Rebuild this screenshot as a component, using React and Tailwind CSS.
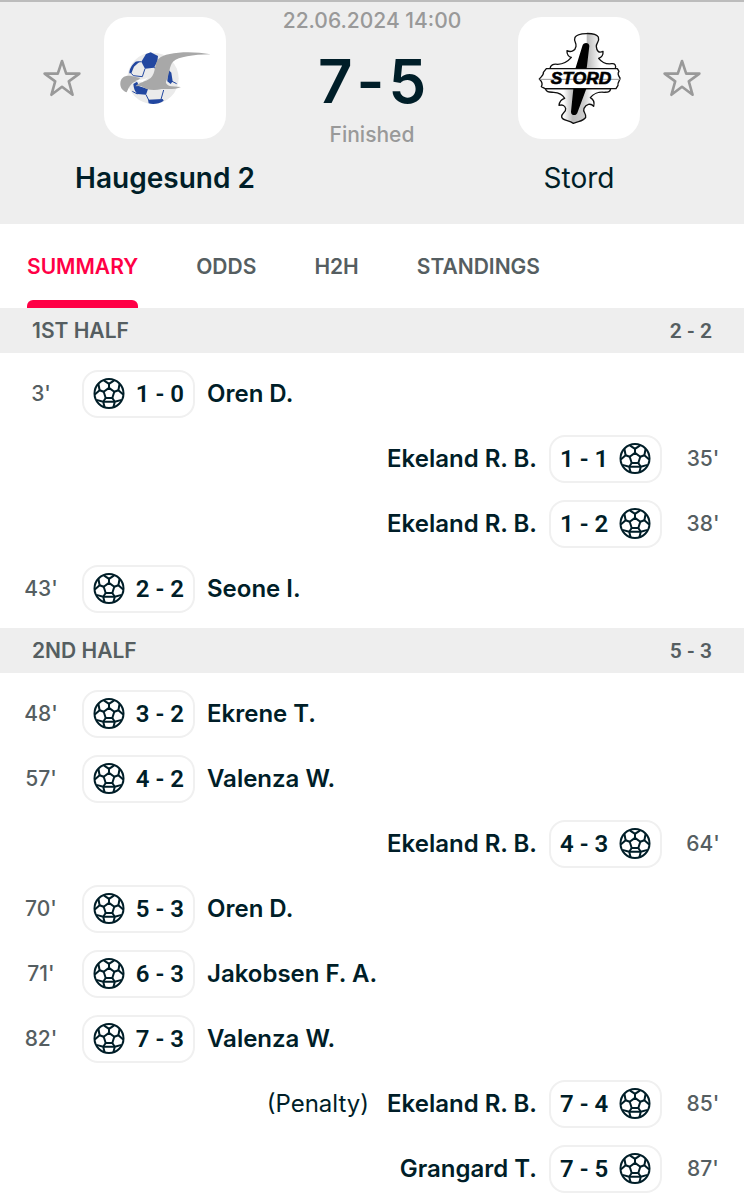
const halves = [
    {
        title: "1st half",
        score: "2 - 2",
        events: [
            { side: "home", time: "3'", score: "1 - 0", player: "Oren D." },
            { side: "away", time: "35'", score: "1 - 1", player: "Ekeland R. B." },
            { side: "away", time: "38'", score: "1 - 2", player: "Ekeland R. B." },
            { side: "home", time: "43'", score: "2 - 2", player: "Seone I." },
        ],
    },
    {
        title: "2nd half",
        score: "5 - 3",
        events: [
            { side: "home", time: "48'", score: "3 - 2", player: "Ekrene T." },
            { side: "home", time: "57'", score: "4 - 2", player: "Valenza W." },
            { side: "away", time: "64'", score: "4 - 3", player: "Ekeland R. B." },
            { side: "home", time: "70'", score: "5 - 3", player: "Oren D." },
            { side: "home", time: "71'", score: "6 - 3", player: "Jakobsen F. A." },
            { side: "home", time: "82'", score: "7 - 3", player: "Valenza W." },
            { side: "away", time: "85'", score: "7 - 4", player: "Ekeland R. B.", note: "(Penalty)" },
            { side: "away", time: "87'", score: "7 - 5", player: "Grangard T." },
        ],
    },
];

const tabs = ["Summary", "Odds", "H2H", "Standings"];

const BallIcon = () => (
    <svg viewBox="0 0 32 32" className="h-8 w-8 shrink-0" fill="none" stroke="#001e28" strokeWidth="2" strokeLinejoin="round" aria-hidden="true">
        <circle cx="16" cy="15.5" r="14.5" />
        <path d="M16 9.9 21.3 13.8 19.3 20H12.7L10.7 13.8Z" />
        <path d="M16 9.9V5.8M21.3 13.8 25.4 12.2M19.3 20 21.8 23.7M12.7 20 10.2 23.7M10.7 13.8 6.6 12.2" />
        <path d="M10.8 2.3 16 5.8 21.2 2.3M26.6 5.7 25.4 12.2 30.2 16.5M28.6 21.9 21.8 23.7 20.4 29.3M11.6 29.3 10.2 23.7 3.4 21.9M1.8 16.5 6.6 12.2 5.4 5.7M10.2 23.7H21.8" />
    </svg>
);

const StarButton = ({ team }) => (
    <button type="button" aria-label={`Add ${team} to favourites`} className="w-9 shrink-0">
        <svg viewBox="0 0 36 38" className="w-full overflow-visible" fill="none" stroke="#999" strokeWidth="2.6" strokeLinejoin="round">
            <path d="M18 2 22.2 14.6H35.4L24.8 22.4 28.6 35.8 18 27.8 7.4 35.8 11.2 22.4 0.6 14.6H13.8Z" />
        </svg>
    </button>
);

const HaugesundLogo = () => (
    <svg viewBox="12 21 366 366" className="w-full" role="img" aria-label="Haugesund">
        <circle cx="159" cy="205" r="77" fill="#ebebeb" />
        <g fill="#2247a0">
            <path d="M138 132 152 127 174 138 172 155 162 173 135 176 124 155Z" />
            <path d="M88 190C88 175 97 163 107 155L120 154 102 170 94 190Z" />
            <path d="M100 222 111 215 118 229 144 237 138 254 112 252C104 244 101 234 100 222Z" />
            <path d="M204 178 214 188 218 214 212 222 202 214Z" />
            <path d="M144 269 188 267 191 272C178 282 158 284 146 280Z" />
        </g>
        <g fill="none" stroke="#2247a0" strokeWidth="3">
            <path d="M107 157 124 155M135 176 127 200M94 190 100 197 127 200M162 173 176 176M138 254 146 270M183 268 191 240M216 214 230 221M97 244 112 252" />
        </g>
        <path
            d="M61 219C62 204 72 196 90 197L121 204 112 212C96 216 88 228 80 247 67 242 60 232 61 219Z"
            fill="#a8a8a8"
        />
        <path d="M106 212 134 207 146 202 128 216Z" fill="#fff" />
        <path
            d="M106 229C116 217 137 216 152 204 168 190 162 160 176 146 194 127 270 121 332 133 276 134 238 140 219 155 207 168 209 194 199 212 195 219 201 226 214 229L243 231C229 239 202 237 185 237 157 244 137 238 123 228Z"
            fill="#a8a8a8"
        />
    </svg>
);

const StordLogo = () => (
    <svg viewBox="22 21 366 366" className="w-full" role="img" aria-label="Stord">
        <defs>
            <linearGradient id="shade-top" x1="0" x2="1" y1="0" y2="0">
                <stop offset="0.55" stopColor="#fff" />
                <stop offset="0.57" stopColor="#bbb" />
                <stop offset="0.78" stopColor="#fff" />
            </linearGradient>
            <linearGradient id="shade-bottom" x1="0" x2="1" y1="0" y2="0">
                <stop offset="0.28" stopColor="#fff" />
                <stop offset="0.42" stopColor="#bbb" />
                <stop offset="0.58" stopColor="#ccc" />
                <stop offset="0.72" stopColor="#fff" />
            </linearGradient>
        </defs>
        <g stroke="#111" strokeWidth="4" strokeLinejoin="round">
            <path
                d="M118 176C119 166 128 160 141 163 158 162 172 154 182 142 174 142 168 132 169 122 181 128 194 122 196 109 198 98 188 94 193 82 200 68 254 66 263 81 268 96 256 98 257 110 258 123 264 130 277 124 278 134 272 142 264 145 274 158 287 163 303 161 313 160 317 166 314 176Z"
                fill="url(#shade-top)"
            />
            <path
                d="M104 236C107 247 116 246 129 247 146 248 157 256 162 265 152 268 146 276 145 286 156 283 163 287 165 296 167 307 151 310 153 321 156 333 174 330 188 340 202 333 219 334 225 322 228 310 215 307 220 295 226 283 240 278 249 289 252 278 248 268 239 263 247 252 264 245 281 247 292 246 299 246 300 236Z"
                fill="url(#shade-bottom)"
            />
            <path
                d="M107 176H320L325 184C320 190 322 196 328 204 329 212 320 216 322 226L316 236H103L92 230C97 222 94 215 86 207 92 199 101 194 98 187Z"
                fill="#fff"
            />
        </g>
        <path d="M87 208H328" stroke="#999" strokeWidth="3" />
        <path d="M215 108C217 96 236 96 236 108L228 176H194Z" />
        <path d="M188 236H227L201 306C199 319 180 318 181 305Z" />
        <text
            x="211"
            y="222"
            textAnchor="middle"
            stroke="#000"
            strokeWidth="2"
            className="font-['Liberation_Sans',sans-serif] text-[52px] font-bold italic"
        >
            STORD
        </text>
    </svg>
);

const TeamLogo = ({ children }) => (
    <div className="w-[122px] shrink-0 overflow-hidden rounded-3xl bg-white">{children}</div>
);

const MatchHeader = () => (
    <header className="border-t-2 border-[#bcbcbc] bg-[#eee] pb-7">
        <div className="flex items-start justify-between px-11 pt-[5px]">
            <div className="flex items-center gap-6 pt-[10px]">
                <StarButton team="Haugesund 2" />
                <TeamLogo>
                    <HaugesundLogo />
                </TeamLogo>
            </div>
            <div className="text-center text-[21px] leading-7 font-medium whitespace-nowrap text-[#999]">
                <p>22.06.2024 14:00</p>
                <p className="mt-4 flex justify-center gap-1 text-[60px] leading-[60px] font-semibold text-[#001e28]">
                    <span>7</span>
                    <span>-</span>
                    <span>5</span>
                </p>
                <p className="mt-[10px]">Finished</p>
            </div>
            <div className="flex items-center gap-6 pt-[10px]">
                <TeamLogo>
                    <StordLogo />
                </TeamLogo>
                <StarButton team="Stord" />
            </div>
        </div>
        <div className="mt-[11px] flex justify-between px-11 text-center text-[28px] leading-9">
            <h2 className="w-[242px] font-semibold">Haugesund 2</h2>
            <h2 className="w-[242px]">Stord</h2>
        </div>
    </header>
);

const EventRow = ({ side, time, score, player, note }) => (
    <li className={`flex h-[65px] items-center ${side === "away" ? "flex-row-reverse" : ""}`}>
        <span className="w-[82px] text-center text-[21px] font-medium text-[#555e61]">{time}</span>
        <span
            className={`flex h-12 w-[113px] items-center justify-between rounded-2xl border-2 border-[#f0f0f0] px-[9px] ${
                side === "away" ? "flex-row-reverse" : ""
            }`}
        >
            <BallIcon />
            <span className="font-['Roboto',sans-serif] font-semibold">{score}</span>
        </span>
        <span className="mx-3 font-semibold">{player}</span>
        {note && <span className="mr-1.5">{note}</span>}
    </li>
);

const App = () => {
    return (
        <div className="bg-white font-['Inter',sans-serif] text-2xl text-[#001e28]">
            <MatchHeader />

            <nav className="flex h-[84px] gap-[58px] px-[27px] text-[21px] font-semibold uppercase">
                {tabs.map((tab, index) => (
                    <a
                        key={tab}
                        href={`#${tab.toLowerCase()}`}
                        className={`flex flex-col justify-between pt-[29px] ${index === 0 ? "text-[#ff0046]" : "text-[#555e61]"}`}
                    >
                        <span className="leading-7">{tab}</span>
                        {index === 0 && <span className="h-2 rounded-t-md bg-[#ff0046]" />}
                    </a>
                ))}
            </nav>

            <main>
                {halves.map((half) => (
                    <section key={half.title}>
                        <div className="flex h-[45px] items-center justify-between bg-[#eee] px-8 text-[21px] font-semibold text-[#555e61]">
                            <h3 className="uppercase">{half.title}</h3>
                            <span className="font-['Roboto',sans-serif]">{half.score}</span>
                        </div>
                        <ul className="pt-2 pb-[7px]">
                            {half.events.map((event) => (
                                <EventRow key={event.time} {...event} />
                            ))}
                        </ul>
                    </section>
                ))}
            </main>
        </div>
    );
};

export default App;
